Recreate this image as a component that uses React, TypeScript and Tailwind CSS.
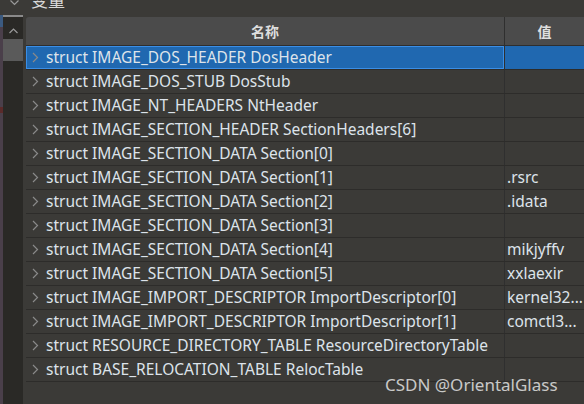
const rows: [string, string][] = [
  ["struct IMAGE_DOS_HEADER DosHeader", ""],
  ["struct IMAGE_DOS_STUB DosStub", ""],
  ["struct IMAGE_NT_HEADERS NtHeader", ""],
  ["struct IMAGE_SECTION_HEADER SectionHeaders[6]", ""],
  ["struct IMAGE_SECTION_DATA Section[0]", ""],
  ["struct IMAGE_SECTION_DATA Section[1]", ".rsrc"],
  ["struct IMAGE_SECTION_DATA Section[2]", ".idata"],
  ["struct IMAGE_SECTION_DATA Section[3]", ""],
  ["struct IMAGE_SECTION_DATA Section[4]", "mikjyffv"],
  ["struct IMAGE_SECTION_DATA Section[5]", "xxlaexir"],
  ["struct IMAGE_IMPORT_DESCRIPTOR ImportDescriptor[0]", "kernel32..."],
  ["struct IMAGE_IMPORT_DESCRIPTOR ImportDescriptor[1]", "comctl3..."],
  ["struct RESOURCE_DIRECTORY_TABLE ResourceDirectoryTable", ""],
  ["struct BASE_RELOCATION_TABLE RelocTable", ""],
];

function Chevron() {
  return (
    <svg width="7" height="11" viewBox="0 0 7 11" className="shrink-0 -mt-[2px]">
      <path d="M1 1 L5.5 5.5 L1 10" fill="none" stroke="#8a8a8a" strokeWidth="1.2" />
    </svg>
  );
}

export default function App() {
  return (
    <div
      className="relative w-[584px] h-[404px] overflow-hidden bg-[#3b3a37] text-[#dcdcdc] flex flex-col"
      style={{ fontFamily: '"Noto Sans", "Noto Sans CJK SC", sans-serif' }}
    >
      {/* ── Top bar (cut off) ───────────────────────── */}
      <div className="h-[15px] shrink-0 flex items-end gap-[12px] pl-[10px] overflow-hidden">
        <svg width="9" height="6" viewBox="0 0 9 6" className="mb-[9px]">
          <path d="M0.5 0.5 L4.5 4.5 L8.5 0.5" fill="none" stroke="#9a9a9a" strokeWidth="1.2" />
        </svg>
        <span className="text-[17px] leading-none mb-[7px] text-[#d8d8d8]" style={{ fontFamily: '"Noto Sans CJK SC", sans-serif' }}>
          变量
        </span>
      </div>

      <div className="flex flex-1 min-h-0">
        {/* ── Left strip + scroll column ─────────────── */}
        <div className="w-[3px] bg-[#4a3f4a] flex flex-col">
          <div className="h-[12px] bg-[#3b5a80]" />
          <div className="h-[80px]" />
          <div className="h-[6px] bg-[#5a2a2a]" />
        </div>
        <div className="w-[20px] bg-[#2a2926] flex flex-col items-center">
          <div className="w-full h-[2px] bg-[#8a8a8a]" />
          <svg width="9" height="6" viewBox="0 0 9 6" className="mt-[11px]">
            <path d="M0.5 5 L4.5 1 L8.5 5" fill="none" stroke="#9a9a9a" strokeWidth="1.2" />
          </svg>
          <div className="w-full h-[22px] bg-[#5a5a5a] mt-[5px]" />
        </div>
        <div className="w-[3px]" />

        {/* ── Table ─────────────────────────────────── */}
        <div className="flex-1 flex flex-col pt-[2px]">
          <div className="h-[29px] shrink-0 flex bg-[#4b4b4b] border-b border-[#2e2e2e] rounded-tl-[3px] text-[14px] font-bold text-[#dedede]">
            <div className="w-[478px] flex items-center justify-center" style={{ fontFamily: '"Noto Sans CJK SC", sans-serif' }}>
              名称
            </div>
            <div className="w-px bg-[#2f2f2f]" />
            <div className="flex-1 flex items-center justify-center" style={{ fontFamily: '"Noto Sans CJK SC", sans-serif' }}>
              值
            </div>
          </div>
          {rows.map(([name, val], i) => {
            const sel = i === 0;
            return (
              <div key={i} className="h-[24px] shrink-0 flex border-b border-[#2d2c2a] text-[15.5px] leading-none">
                <div
                  className={
                    "w-[478px] flex items-center gap-[7px] whitespace-nowrap overflow-hidden " +
                    (sel ? "bg-[#2068b0] border border-[#3a8ee6] pl-[5px] pt-px" : "pl-[6px] pt-px")
                  }
                >
                  <Chevron />
                  <span className="text-[#dde3ea]">{name}</span>
                </div>
                <div className="w-px bg-[#2f2f2f]" />
                <div className={"flex-1 flex items-center pl-[2px] pt-px whitespace-nowrap overflow-hidden text-[#dde3ea] " + (sel ? "bg-[#2068b0]" : "")}>
                  {val}
                </div>
              </div>
            );
          })}
        </div>
      </div>

      {/* ── Watermark ───────────────────────────────── */}
      <div className="absolute left-[385px] top-[376px] text-[17px] leading-none text-[#e4e4e4]/85 whitespace-nowrap">
        CSDN @OrientalGlass
      </div>
    </div>
  );
}
